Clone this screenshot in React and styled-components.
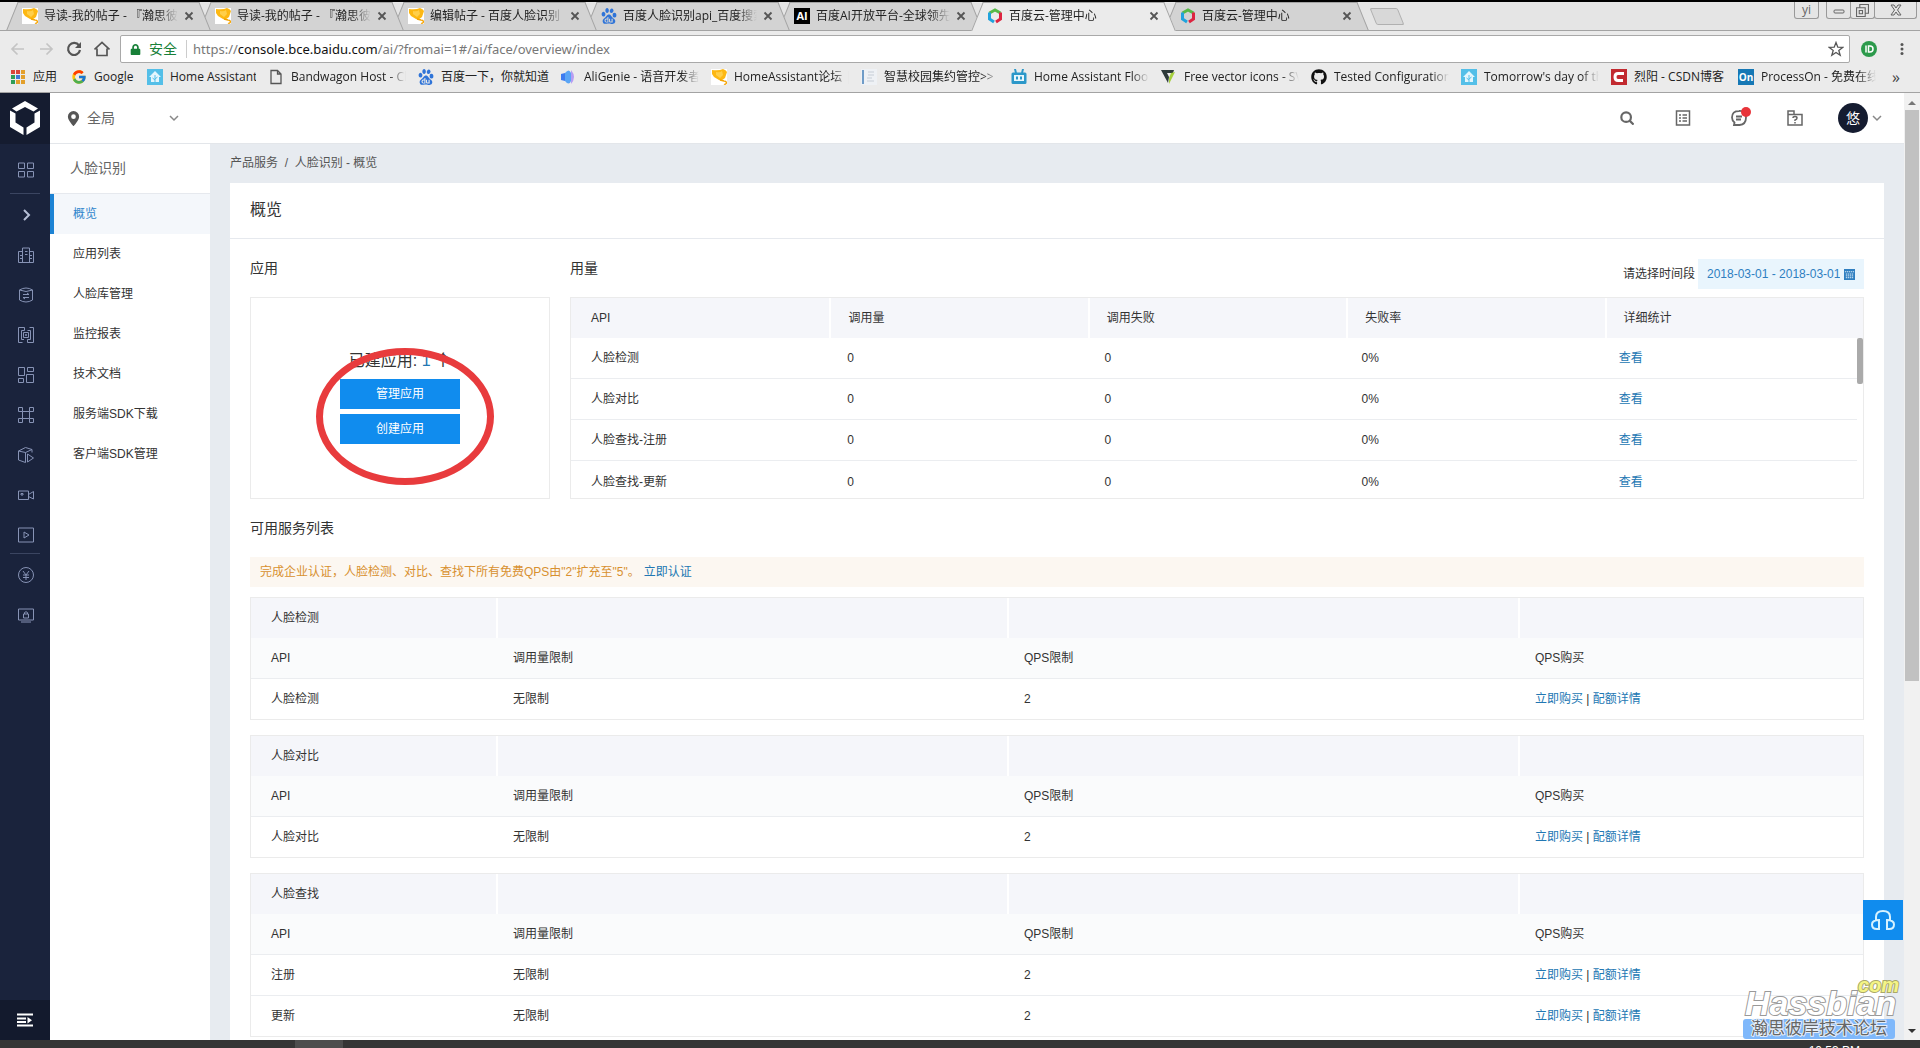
import React from "react";
import styled, { createGlobalStyle, css } from "styled-components";
import { FaGithub, FaLock } from "react-icons/fa";
import { FcGoogle } from "react-icons/fc";
import { SiBaidu } from "react-icons/si";

const GlobalStyle = createGlobalStyle`
  * {
    box-sizing: border-box;
  }
  body {
    margin: 0;
    overflow: hidden;
    background: #e7ebf0;
    color: #333;
    font-family: "Liberation Sans", "Noto Sans CJK SC", sans-serif;
    font-size: 12px;
    line-height: 18px;
  }
  button,
  input {
    font: inherit;
    color: inherit;
    border: none;
    background: none;
    padding: 0;
    margin: 0;
    outline: none;
  }
  a {
    color: #2277b3;
    text-decoration: none;
  }
  svg {
    display: block;
    flex: none;
  }
`;

const Screen = styled.div`
  display: flex;
  flex-direction: column;
  height: 100vh;
  border-top: 2px solid #000;
`;

/* ---------- browser ---------- */

const Browser = styled.header`
  flex: none;
  background: #ebebeb;
  border-bottom: 1px solid #a3a3a3;
  color: #222;
  font-family: "Open Sans", "Noto Sans CJK SC", sans-serif;
`;

const TabStrip = styled.div`
  display: flex;
  height: 29px;
  padding-left: 6px;
  background: #e5e5e5;
  border-bottom: 1px solid #a3a3a3;
`;

const tabSide = css`
  content: "";
  position: absolute;
  z-index: -1;
  top: 0;
  bottom: ${({ $active }) => ($active ? "-1px" : "0")};
  background: ${({ $active }) => ($active ? "#ebebeb" : "#d3d3d3")};
  border-top: 1px solid #a3a3a3;
`;

const Tab = styled.div`
  position: relative;
  z-index: ${({ $order }) => $order};
  isolation: isolate;
  display: flex;
  align-items: center;
  gap: 6px;
  width: 205px;
  margin-right: -12px;
  padding: 0 17px 0 16px;
  &::before {
    ${tabSide}
    left: 6px;
    right: 50%;
    border-left: 1px solid #a3a3a3;
    transform: skewX(-22deg);
    transform-origin: center;
  }
  &::after {
    ${tabSide}
    left: 42%;
    right: 6px;
    border-right: 1px solid #a3a3a3;
    transform: skewX(22deg);
  }
`;

const TabTitle = styled.button`
  flex: 1;
  min-width: 0;
  height: 20px;
  overflow: hidden;
  white-space: nowrap;
  text-align: left;
  mask-image: linear-gradient(to right, #000 85%, transparent);
`;

const NewTab = styled.button`
  align-self: center;
  width: 28px;
  height: 17px;
  margin-left: 16px;
  background: #d8d8d8;
  border: 1px solid #b0b0b0;
  border-radius: 2px;
  transform: skewX(22deg);
`;

const WindowButtons = styled.div`
  display: flex;
  height: 17px;
  margin-left: auto;
  margin-right: 4px;
  color: #666;
`;

const WindowButton = styled.button`
  display: flex;
  align-items: center;
  justify-content: center;
  width: ${({ $wide }) => ($wide ? "43px" : "25px")};
  margin-right: ${({ $apart }) => ($apart ? "7px" : "-1px")};
  border: 1px solid #999;
  border-top: none;
  border-radius: 0 0 3px 3px;
`;

const Toolbar = styled.div`
  display: flex;
  align-items: center;
  height: 32px;
  padding: 4px 12px 0 10px;
`;

const NavButton = styled.button`
  display: flex;
  align-items: center;
  width: 28px;
  color: ${({ disabled }) => (disabled ? "#c4c4c4" : "#555")};
`;

const AddressBar = styled.div`
  display: flex;
  align-items: center;
  flex: 1;
  height: 28px;
  margin: 0 11px 0 -2px;
  padding: 0 5px 0 9px;
  border: 1px solid #a9a9a9;
  border-radius: 2px;
  background: #fff;
  font-family: "Noto Sans", "Noto Sans CJK SC", sans-serif;
  font-size: 13px;
`;

const Secure = styled.span`
  padding: 0 9px 0 8px;
  margin-right: 6px;
  border-right: 1px solid #ccc;
  color: #188038;
  font-size: 14px;
`;

const Url = styled.span`
  flex: 1;
  color: #777;
  b {
    color: #111;
    font-weight: 400;
  }
`;

const ToolbarEnd = styled.div`
  display: flex;
  align-items: center;
  gap: 19px;
`;

const Bookmarks = styled.nav`
  display: flex;
  align-items: center;
  gap: 12px;
  height: 29px;
  padding: 0 20px 1px 10px;
`;

const Bookmark = styled.a`
  display: flex;
  flex: none;
  align-items: center;
  gap: 7px;
  color: #222;
`;

const BookmarkText = styled.span`
  width: ${({ $width }) => $width || 115}px;
  line-height: 20px;
  overflow: hidden;
  white-space: nowrap;
  mask-image: ${({ $width }) =>
    $width ? "none" : "linear-gradient(to right, #000 85%, transparent)"};
`;

const More = styled.button`
  margin-left: auto;
  color: #444;
  font-size: 16px;
`;

/* ---------- console shell ---------- */

const Console = styled.div`
  position: relative;
  display: flex;
  flex: 1;
  min-height: 0;
  overflow: hidden;
`;

const Rail = styled.nav`
  display: flex;
  flex: none;
  flex-direction: column;
  width: 50px;
  background: #1a233c;
  color: #8793b5;
`;

const RailLink = styled.a`
  display: flex;
  align-items: center;
  justify-content: center;
  height: ${({ $tall }) => ($tall ? "50px" : "40px")};
  padding: 2px 0 0 2px;
  color: inherit;
  position: relative;
  &::after {
    content: "";
    display: ${({ $divider }) => ($divider ? "block" : "none")};
    position: absolute;
    left: 10px;
    right: 10px;
    bottom: 0;
    border-bottom: 1px solid #3b4561;
  }
`;

const RailLogo = styled(RailLink)`
  height: 51px;
  padding: 0 0 1px;
  background: #151c30;
  color: #fff;
`;

const RailToggle = styled.button`
  display: flex;
  align-items: center;
  justify-content: center;
  height: 40px;
  margin-top: auto;
  background: #131a2d;
  color: #fff;
`;

const Page = styled.div`
  display: flex;
  flex: 1;
  flex-direction: column;
  min-width: 0;
`;

const TopBar = styled.div`
  display: flex;
  flex: none;
  align-items: center;
  height: 51px;
  padding: 0 22px 0 16px;
  background: #fff;
  border-bottom: 1px solid #e3e6ea;
  color: #666;
`;

const Region = styled.button`
  display: flex;
  align-items: center;
  gap: 6px;
  width: 113px;
  font-size: 14px;
  svg:last-child {
    margin-left: auto;
  }
`;

const TopActions = styled.div`
  display: flex;
  align-items: center;
  gap: 36px;
  margin-left: auto;
`;

const IconButton = styled.button`
  display: flex;
  align-items: center;
  justify-content: center;
  width: 20px;
`;

const Account = styled.button`
  display: flex;
  align-items: center;
  gap: 4px;
  margin-left: -3px;
`;

const Avatar = styled.span`
  display: flex;
  align-items: center;
  justify-content: center;
  width: 30px;
  height: 30px;
  border-radius: 50%;
  background: #151c30;
  color: #fff;
  font-size: 14px;
`;

const Columns = styled.div`
  display: flex;
  flex: 1;
  min-height: 0;
`;

const SideMenu = styled.aside`
  flex: none;
  width: 160px;
  background: #fff;
`;

const SideTitle = styled.div`
  height: 50px;
  padding-left: 20px;
  border-bottom: 1px solid #e6e9ee;
  color: #666;
  font-size: 14px;
  line-height: 48px;
`;

const SideLink = styled.a`
  display: block;
  height: 40px;
  padding-left: 19px;
  border-left: 4px solid ${({ $active }) => ($active ? "#1d83d4" : "transparent")};
  background: ${({ $active }) => ($active ? "#f4f7fb" : "transparent")};
  color: ${({ $active }) => ($active ? "#2f86cc" : "#333")};
  line-height: 40px;
`;

const Content = styled.main`
  flex: 1;
  min-width: 0;
  padding: 0 20px;
  background: #e7ebf0;
  overflow: hidden;
`;

const Breadcrumb = styled.div`
  height: 39px;
  color: #555;
  line-height: 38px;
  a {
    color: inherit;
  }
`;

const Card = styled.section`
  background: #fff;
`;

const CardTitle = styled.h1`
  height: 56px;
  margin: 0;
  padding-left: 20px;
  border-bottom: 1px solid #e6e9ee;
  font-size: 16px;
  font-weight: 400;
  line-height: 54px;
`;

const CardBody = styled.div`
  padding: 0 20px 20px;
`;

const Overview = styled.div`
  display: grid;
  grid-template-columns: 300px minmax(0, 1fr);
  column-gap: 20px;
`;

const SectionHead = styled.div`
  display: flex;
  align-items: center;
  justify-content: space-between;
  height: 58px;
  h2 {
    margin: 0;
    font-size: 14px;
    font-weight: 400;
  }
`;

const AppBox = styled.div`
  position: relative;
  display: flex;
  flex-direction: column;
  align-items: center;
  gap: 5px;
  height: 202px;
  padding-top: 50px;
  border: 1px solid #ebebeb;
`;

const AppCount = styled.div`
  font-size: 16px;
  line-height: 26px;
`;

const PrimaryButton = styled.button`
  width: 120px;
  height: 30px;
  background: #108cee;
  color: #fff;
`;

const Marker = styled.div`
  position: absolute;
  left: 65px;
  top: 50px;
  width: 178px;
  height: 137px;
  border: 7px solid #e83b3d;
  border-radius: 50%;
  pointer-events: none;
`;

const DatePicker = styled.label`
  display: flex;
  align-items: center;
  align-self: flex-end;
  gap: 3px;
  margin-bottom: 8px;
`;

const DateField = styled.span`
  display: flex;
  align-items: center;
  gap: 4px;
  width: 166px;
  height: 30px;
  padding: 0 9px;
  background: #e9f5fd;
  color: #2f7fc1;
  input {
    flex: 1;
    min-width: 0;
  }
`;

const Usage = styled.div`
  height: 202px;
  border: 1px solid #ebebeb;
`;

const UsageBody = styled.div`
  display: flex;
  align-items: flex-start;
  height: 160px;
  overflow: hidden;
`;

const ScrollThumb = styled.div`
  flex: none;
  width: 6px;
  height: 46px;
  border-radius: 2px;
  background: #aaa;
`;

const Table = styled.table`
  width: 100%;
  table-layout: fixed;
  border-spacing: 0;
  border: ${({ $framed }) => ($framed ? "1px solid #ebebeb" : "none")};
  margin-bottom: ${({ $framed }) => ($framed ? "15px" : "0")};
  th,
  td {
    height: 41px;
    padding: 0 0 0 20px;
    border-bottom: 1px solid #ebedf0;
    font-weight: 400;
    text-align: left;
  }
  td:not(:first-child),
  th:not(:first-child) {
    padding-left: ${({ $framed }) => ($framed ? "17px" : "19px")};
  }
  thead th {
    height: 40px;
    background: #f5f6fa;
    border-bottom: none;
  }
  thead th:not(:first-child) {
    padding-left: 17px;
    border-left: 2px solid #fff;
  }
  tbody tr:last-child td {
    height: ${({ $framed }) => ($framed ? "40px" : "41px")};
    border-bottom: none;
  }
`;

const SubHead = styled.tr`
  background: #fafbfc;
`;

const Notice = styled.div`
  height: 30px;
  margin-bottom: 10px;
  padding-left: 10px;
  background: #fcf7f1;
  color: #d8902f;
  line-height: 30px;
  a {
    margin-left: 4px;
  }
`;

const Scrollbar = styled.div`
  display: flex;
  flex: none;
  flex-direction: column;
  align-items: center;
  width: 16px;
  padding: 6px 0 5px;
  background: #f1f1f1;
  color: #777;
`;

const ScrollbarThumb = styled.div`
  width: 14px;
  height: 61%;
  margin: 3px 0 auto;
  background: #c1c1c1;
`;

const Support = styled.button`
  position: absolute;
  right: 17px;
  bottom: 100px;
  display: flex;
  align-items: center;
  justify-content: center;
  width: 40px;
  height: 40px;
  background: #108cee;
  color: #d6f2ff;
`;

const Watermark = styled.div`
  position: absolute;
  right: 25px;
  bottom: 1px;
  width: 152px;
  font-style: italic;
`;

const WatermarkCom = styled.div`
  margin-right: -4px;
  color: #f4f486;
  font-size: 20px;
  font-weight: 700;
  line-height: 12px;
  text-align: right;
  -webkit-text-stroke: 2px #aaa86a;
  paint-order: stroke fill;
`;

const WatermarkName = styled.div`
  padding: 0 0 4px 2px;
  color: #fff;
  font-size: 34px;
  font-weight: 700;
  line-height: 24px;
  -webkit-text-stroke: 2px #999;
  paint-order: stroke fill;
`;

const WatermarkForum = styled.div`
  height: 20px;
  border-radius: 3px;
  background: #7fb8fb;
  color: #666;
  font-size: 17px;
  font-style: normal;
  line-height: 20px;
  text-align: center;
  -webkit-text-stroke: 2px #e4eefa;
  paint-order: stroke fill;
`;

const Taskbar = styled.footer`
  display: flex;
  flex: none;
  height: 8px;
  padding: 0 60px 0 295px;
  overflow: hidden;
  background: #353535;
  color: #fff;
`;

const TaskItem = styled.div`
  width: 48px;
  background: #4d4d4d;
`;

const Clock = styled.time`
  margin-left: auto;
  padding-top: 4px;
  line-height: 14px;
`;

/* ---------- icons ---------- */

const Icon = ({ size = 16, box = 16, width = 1, children, ...rest }) => (
  <svg
    width={size}
    height={size}
    viewBox={`0 0 ${box} ${box}`}
    fill="none"
    stroke="currentColor"
    strokeWidth={width}
    aria-hidden="true"
    {...rest}
  >
    {children}
  </svg>
);

const Trophy = () => (
  <Icon stroke="none">
    <rect width="16" height="16" fill="#fff" />
    <path d="M1 1q7 1 11-1 3 1 4 3l-2 6q-3 3-6 2L3 8 1 5z" fill="#fdb813" />
    <path d="M5 3q4 1 6-1l1 4-3 3-4-3z" fill="#ffcf4a" />
    <path d="M9 11l4 1M13 12.500a1.500 1.500 0 110 2.500" stroke="#f5a300" strokeWidth="1.300" />
  </Icon>
);

const BceIcon = () => (
  <Icon width="3">
    <path d="M2.500 5L8 2l5.500 3" stroke="#56b947" />
    <path d="M2.500 4.500v6.500L7 14" stroke="#20a3dd" />
    <path d="M13.500 4.500v6.500L9 14" stroke="#dd2440" />
  </Icon>
);

const AiIcon = () => (
  <svg width="16" height="16" viewBox="0 0 16 16" aria-hidden="true">
    <rect width="16" height="16" fill="#000" />
    <text x="8" y="12" fill="#fff" fontSize="11" fontWeight="700" textAnchor="middle">
      AI
    </text>
  </svg>
);

const BaiduIcon = () => <SiBaidu size={16} color="#2f74d8" />;

const HomeIcon = () => (
  <Icon stroke="none">
    <rect width="16" height="16" fill="#54bfe8" />
    <path d="M8 2l6 6h-2v5H4V8H2z" fill="#e4f6fd" />
    <path d="M8 6v7M8 11L5.500 9M8 10l2.500-2" stroke="#54bfe8" />
  </Icon>
);

const appColors = ["#d9453a", "#d9453a", "#e3a02c", "#2f9e58", "#3f78d8", "#e3a02c", "#2f9e58", "#e3a02c", "#e3a02c"];

const AppsIcon = () => (
  <Icon stroke="none">
    {appColors.map((fill, i) => (
      <rect key={i} x={1 + (i % 3) * 5} y={1 + Math.floor(i / 3) * 5} width="4" height="4" fill={fill} />
    ))}
  </Icon>
);

const FileIcon = () => (
  <Icon color="#555" width="1.3">
    <path d="M3 1.500h6.500L13 5v9.500H3zM9.500 1.500V5H13" />
  </Icon>
);

const GenieIcon = () => (
  <Icon stroke="none">
    <path d="M0 5l4-1v8l-4-1z" fill="#3d7bf0" />
    <path d="M4 4q4-5 6 0v8q-2 5-6 0z" fill="#5aa5f5" />
    <path d="M10 1q6 7 0 14z" fill="#b79df3" />
  </Icon>
);

const BookIcon = () => (
  <Icon stroke="none">
    <rect width="16" height="16" fill="#eef1f5" />
    <path d="M1 1h2v14H1z" fill="#6f9cc8" />
    <path d="M7 3h6M7 6h6M6 9h5M6 12h7" stroke="#c6cdd6" />
  </Icon>
);

const BotIcon = () => (
  <Icon stroke="none">
    <path d="M2 3.500h12q1.500 0 1.500 1.500v8.500q0 1.500-1.500 1.500H2Q.500 15 .500 13.500V5Q.500 3.500 2 3.500zM3 0h2l1 4H4zM11 0h2l-1 4h-2z" fill="#2c98c9" />
    <path d="M3 6h10v6H3z" fill="#e9f7fc" />
    <path d="M5 7.500h2v3H5zM9 7.500h2v3H9z" fill="#2c98c9" />
  </Icon>
);

const VectorIcon = () => (
  <Icon stroke="none">
    <path d="M0 1h13l-1 3H6l2 4-1 6z" fill="#2d3a3a" />
    <path d="M14 3L8 15V9l2-5z" fill="#a5cf3d" />
  </Icon>
);

const CsdnIcon = () => (
  <Icon width="3">
    <rect width="16" height="16" fill="#c22a30" stroke="none" />
    <path d="M13 4.500H7q-3 0-3 3.500t3 3.500h5" stroke="#fff" />
  </Icon>
);

const ProcessIcon = () => (
  <svg width="16" height="16" viewBox="0 0 16 16" aria-hidden="true">
    <rect width="16" height="16" fill="#1678b5" />
    <text x="8" y="12" fill="#fff" fontSize="10" fontWeight="700" textAnchor="middle">
      On
    </text>
  </svg>
);

const CloseIcon = () => (
  <Icon size={10} box={10} width="1.800" color="#555">
    <path d="M1.500 1.500l7 7M8.500 1.500l-7 7" />
  </Icon>
);

const ChevronDown = () => (
  <Icon size={10} box={10} width="1.500" color="#888">
    <path d="M1 3l4 4 4-4" />
  </Icon>
);

/* ---------- data ---------- */

const tabs = [
  { title: "导读-我的帖子 - 『瀚思彼岸", icon: Trophy },
  { title: "导读-我的帖子 - 『瀚思彼岸", icon: Trophy },
  { title: "编辑帖子 - 百度人脸识别", icon: Trophy },
  { title: "百度人脸识别api_百度搜索", icon: BaiduIcon },
  { title: "百度AI开放平台-全球领先", icon: AiIcon },
  { title: "百度云-管理中心", icon: BceIcon, active: true },
  { title: "百度云-管理中心", icon: BceIcon },
];

const bookmarks = [
  { title: "应用", icon: AppsIcon, width: 26 },
  { title: "Google", icon: () => <FcGoogle size={16} />, width: 41 },
  { title: "Home Assistant", icon: HomeIcon, width: 86 },
  { title: "Bandwagon Host - Client", icon: FileIcon },
  { title: "百度一下，你就知道", icon: BaiduIcon, width: 108 },
  { title: "AliGenie - 语音开发者", icon: GenieIcon },
  { title: "HomeAssistant论坛 |", icon: Trophy },
  { title: "智慧校园集约管控>>", icon: BookIcon },
  { title: "Home Assistant Floor", icon: BotIcon },
  { title: "Free vector icons - SVG", icon: VectorIcon },
  { title: "Tested Configuration", icon: () => <FaGithub size={16} color="#111" /> },
  { title: "Tomorrow's day of the", icon: HomeIcon },
  { title: "烈阳 - CSDN博客", icon: CsdnIcon, width: 92 },
  { title: "ProcessOn - 免费在线", icon: ProcessIcon },
];

const railIcons = [
  { name: "全部产品", tall: true, divider: true, path: "M.500 1h6v5.500h-6zM9.500 1h6v5.500h-6zM.500 9.500h6V15h-6zM9.500 9.500h6V15h-6z" },
  { name: "展开", bold: true, path: "M6 3l5 5-5 5" },
  { name: "计算", path: "M4.500 15.500V1h7v14.500M.500 4.500h4v11h-4zM11.500 4.500h4v11h-4zM7 4.500h2.500M7 7.500h2.500M4 15.500h8M2 8.500h2.500M2 11.500h2.500M11.500 8.500H14M11.500 11.500H14" },
  { name: "数据库", path: "M1.500 3q6.500-4 13 0v10q-6.500 4-13 0zM1.500 3q6.500 3 13 0M5 7.500h6L9 6M11 10.500H5L7 12" },
  { name: "网络", path: "M6.500 .500h-6v15h4M9.500 15.500h6V.500h-4M6.500 .500v3h-3v9H6M9.500 15.500v-3h3v-9H9.500M5.500 5.500h5v5h-5zM7.500 7.500h1v1h-1z" },
  { name: "应用", path: "M.500 .500h6v8h-6zM9.500 .500h6v4h-6zM8.500 7.500h7v8h-7zM.500 11.500h5v4h-5z" },
  { name: "物联网", path: "M.500 .500h4v4h-4zM11.500 .500h4v4h-4zM.500 11.500h4v4h-4zM11.500 11.500h4v4h-4zM4.500 4.500h7v7h-7z" },
  { name: "大数据", path: "M.500 4l7-3.500 6.500 2-6.500 3zM.500 4v9l7 2.500V5.500M14 2.500v3M9.500 7v8l6-4z" },
  { name: "视频", path: "M.500 4h10v8.500H.500zM10.500 7.500l5-3v7.500l-5-2.500M3 6.500h2v1.500H3z" },
  { name: "多媒体", divider: true, path: "M.500 1h15v14H.500zM6 5l5 3-5 3z" },
  { name: "财务", path: "M8 .500a7.500 7.500 0 100 15A7.500 7.500 0 108 .500M5 4l3 4 3-4M8 8v5M5 8h6M5 10.500h6" },
  { name: "安全", path: "M.500 2h15v11H.500zM3 15h10M5.500 7h5v4h-5zM6.500 7V5.500q1.500-1.500 3 0V7" },
];

const menu = ["概览", "应用列表", "人脸库管理", "监控报表", "技术文档", "服务端SDK下载", "客户端SDK管理"];

const usageHeads = ["API", "调用量", "调用失败", "失败率", "详细统计"];
const usageRows = ["人脸检测", "人脸对比", "人脸查找-注册", "人脸查找-更新"];

const services = [
  { name: "人脸检测", apis: ["人脸检测"] },
  { name: "人脸对比", apis: ["人脸对比"] },
  { name: "人脸查找", apis: ["注册", "更新"] },
];

/* ---------- parts ---------- */

const BrowserBar = () => (
  <Browser>
    <TabStrip>
      {tabs.map(({ title, icon: TabIcon, active }, i) => (
        <Tab key={i} $active={active} $order={active ? 20 : 10 - i}>
          <TabIcon />
          <TabTitle>{title}</TabTitle>
          <button aria-label="关闭标签页">
            <CloseIcon />
          </button>
        </Tab>
      ))}
      <NewTab aria-label="新标签页" />
      <WindowButtons>
        <WindowButton $apart>yi</WindowButton>
        <WindowButton aria-label="最小化">
          <Icon size={12} box={12}>
            <rect x="1" y="6" width="10" height="3" rx="1" />
          </Icon>
        </WindowButton>
        <WindowButton aria-label="还原">
          <Icon size={13} box={12}>
            <path d="M3.500 3V.500h8v8H9M.500 3.500H8.500v8h-8zM3 6h3v3H3z" />
          </Icon>
        </WindowButton>
        <WindowButton $wide aria-label="关闭">
          <Icon size={12} box={12}>
            <path d="M1 1h3l2 3 2-3h3L7.500 6l3.500 5H8L6 8l-2 3H1l3.500-5z" />
          </Icon>
        </WindowButton>
      </WindowButtons>
    </TabStrip>
    <Toolbar>
      <NavButton disabled aria-label="后退">
        <Icon width="1.700">
          <path d="M14 8H2M7.500 2.500L2 8l5.500 5.500" />
        </Icon>
      </NavButton>
      <NavButton disabled aria-label="前进">
        <Icon width="1.700">
          <path d="M2 8h12M8.500 2.500L14 8l-5.500 5.500" />
        </Icon>
      </NavButton>
      <NavButton aria-label="刷新">
        <Icon width="2.200">
          <path d="M13 4.500A6 6 0 1014 9" />
          <path d="M15 1v6H9z" fill="currentColor" stroke="none" />
        </Icon>
      </NavButton>
      <NavButton aria-label="主页">
        <Icon width="1.700">
          <path d="M.500 8.500L8 1.500l7.500 7M3 7.500v7h10v-7" />
        </Icon>
      </NavButton>
      <AddressBar>
        <FaLock size={11} color="#188038" />
        <Secure>安全</Secure>
        <Url>
          https://<b>console.bce.baidu.com</b>/ai/?fromai=1#/ai/face/overview/index
        </Url>
        <Icon color="#555" width="1.300">
          <path d="M8 1.500l1.800 4.700 4.900.200-3.900 3 1.400 4.900L8 11.500l-4.200 2.800 1.400-4.900-3.900-3 4.900-.200z" />
        </Icon>
      </AddressBar>
      <ToolbarEnd>
        <Icon width="1.500">
          <circle cx="8" cy="8" r="8" fill="#2c9a4b" stroke="none" />
          <path d="M5 4.500v7M7.500 5h1.500q3 0 3 3t-3 3H7.500z" stroke="#fff" />
        </Icon>
        <Icon size={12} stroke="none" fill="#555">
          <circle cx="8" cy="2" r="2" />
          <circle cx="8" cy="8" r="2" />
          <circle cx="8" cy="14" r="2" />
        </Icon>
      </ToolbarEnd>
    </Toolbar>
    <Bookmarks>
      {bookmarks.map(({ title, icon: MarkIcon, width }) => (
        <Bookmark key={title} href="#">
          <MarkIcon />
          <BookmarkText $width={width}>{title}</BookmarkText>
        </Bookmark>
      ))}
      <More aria-label="更多书签">»</More>
    </Bookmarks>
  </Browser>
);

const IconRail = () => (
  <Rail>
    <RailLogo href="#" aria-label="百度云">
      <Icon size={34} box={34} fill="currentColor" stroke="none">
        <path d="M17 0l13 7.500-4.500 3L17 6l-8.500 4.500-4.500-3z" />
        <path d="M2 9.500l5.500 3v9l8 5V34L2 26z" />
        <path d="M32 9.500l-5.500 3v9l-8 5V34L32 26z" />
      </Icon>
    </RailLogo>
    {railIcons.map(({ name, path, tall, divider, bold }) => (
      <RailLink key={name} href="#" aria-label={name} $tall={tall} $divider={divider}>
        <Icon width={bold ? 2 : 1} color={bold ? "#b6bfd6" : undefined}>
          <path d={path} />
        </Icon>
      </RailLink>
    ))}
    <RailToggle aria-label="收起导航">
      <Icon width="2">
        <path d="M0 2.500h16M0 6.500h9M0 10h9M0 13.500h16" />
        <path d="M10.500 5l4.500 3.200-4.500 3.200z" fill="currentColor" stroke="none" />
      </Icon>
    </RailToggle>
  </Rail>
);

const ConsoleTop = () => (
  <TopBar>
    <Region>
      <Icon size={15} stroke="none" fill="#555">
        <path
          fillRule="evenodd"
          d="M8 0a6 6 0 00-6 6c0 4 6 10 6 10s6-6 6-10a6 6 0 00-6-6zm0 3.500a2.500 2.500 0 110 5 2.500 2.500 0 010-5z"
        />
      </Icon>
      全局
      <ChevronDown />
    </Region>
    <TopActions>
      <IconButton aria-label="搜索">
        <Icon width="2.500" size={14}>
          <circle cx="7" cy="7" r="5.500" />
          <path d="M11 11l4.500 4.500" />
        </Icon>
      </IconButton>
      <IconButton aria-label="工单">
        <Icon width="1.500">
          <path d="M1.500 1h13v14h-13zM4 5h2M4 8h2M4 11h2M7.500 5h4.500M7.500 8h4.500M7.500 11h4.500" />
        </Icon>
      </IconButton>
      <IconButton aria-label="消息">
        <Icon size={24} box={24} width="1.800">
          <path d="M12 5q-7 0-7 6.500 0 3 2.500 5L7 19h5.500q6.500-.500 6.500-7.500T12 5zM9 10.500h6M9 13.500h5" />
          <circle cx="19" cy="6" r="5" fill="#e8343a" stroke="none" />
        </Icon>
      </IconButton>
      <IconButton aria-label="帮助">
        <Icon width="1.500">
          <path d="M1 15V1h6v3.500h8V15zM1 4.500h6M6 8q0-1.500 2-1.500t2 1.500-2 2v1M8 12v1.500" />
        </Icon>
      </IconButton>
      <Account aria-label="账户">
        <Avatar>悠</Avatar>
        <ChevronDown />
      </Account>
    </TopActions>
  </TopBar>
);

const UsagePanel = () => (
  <Usage>
    <Table>
      <thead>
        <tr>
          {usageHeads.map((head) => (
            <th key={head}>{head}</th>
          ))}
        </tr>
      </thead>
    </Table>
    <UsageBody>
      <Table>
        <tbody>
          {usageRows.map((name) => (
            <tr key={name}>
              <td>{name}</td>
              <td>0</td>
              <td>0</td>
              <td>0%</td>
              <td>
                <a href="#">查看</a>
              </td>
            </tr>
          ))}
        </tbody>
      </Table>
      <ScrollThumb />
    </UsageBody>
  </Usage>
);

const ServiceTable = ({ name, apis }) => (
  <Table $framed>
    <colgroup>
      <col width="15.2%" />
      <col width="31.7%" />
      <col width="31.7%" />
      <col />
    </colgroup>
    <thead>
      <tr>
        <th>{name}</th>
        <th />
        <th />
        <th />
      </tr>
    </thead>
    <tbody>
      <SubHead>
        <th>API</th>
        <th>调用量限制</th>
        <th>QPS限制</th>
        <th>QPS购买</th>
      </SubHead>
      {apis.map((api) => (
        <tr key={api}>
          <td>{api}</td>
          <td>无限制</td>
          <td>2</td>
          <td>
            <a href="#">立即购买</a> | <a href="#">配额详情</a>
          </td>
        </tr>
      ))}
    </tbody>
  </Table>
);

const App = () => {
  return (
    <Screen>
      <GlobalStyle />
      <BrowserBar />
      <Console>
        <IconRail />
        <Page>
          <ConsoleTop />
          <Columns>
            <SideMenu>
              <SideTitle>人脸识别</SideTitle>
              {menu.map((item, i) => (
                <SideLink key={item} href="#" $active={i === 0}>
                  {item}
                </SideLink>
              ))}
            </SideMenu>
            <Content>
              <Breadcrumb>
                <a href="#">产品服务</a>&nbsp; / &nbsp;人脸识别 - 概览
              </Breadcrumb>
              <Card>
                <CardTitle>概览</CardTitle>
                <CardBody>
                  <Overview>
                    <div>
                      <SectionHead>
                        <h2>应用</h2>
                      </SectionHead>
                      <AppBox>
                        <AppCount>
                          已建应用: <a href="#">1</a> 个
                        </AppCount>
                        <PrimaryButton>管理应用</PrimaryButton>
                        <PrimaryButton>创建应用</PrimaryButton>
                        <Marker />
                      </AppBox>
                    </div>
                    <div>
                      <SectionHead>
                        <h2>用量</h2>
                        <DatePicker>
                          请选择时间段
                          <DateField>
                            <input defaultValue="2018-03-01 - 2018-03-01" />
                            <Icon size={11} box={12}>
                              <rect width="12" height="12" fill="currentColor" stroke="none" />
                              <path d="M1 3h10M2 5.500h8M2 7.500h8M2 9.500h8" stroke="#e9f5fd" strokeDasharray="1.500 .700" />
                            </Icon>
                          </DateField>
                        </DatePicker>
                      </SectionHead>
                      <UsagePanel />
                    </div>
                  </Overview>
                  <SectionHead>
                    <h2>可用服务列表</h2>
                  </SectionHead>
                  <Notice>
                    完成企业认证，人脸检测、对比、查找下所有免费QPS由"2"扩充至"5"。
                    <a href="#">立即认证</a>
                  </Notice>
                  {services.map((service) => (
                    <ServiceTable key={service.name} {...service} />
                  ))}
                </CardBody>
              </Card>
            </Content>
          </Columns>
        </Page>
        <Scrollbar>
          <Icon size={8} box={8} stroke="none" fill="currentColor">
            <path d="M0 6l4-4 4 4z" />
          </Icon>
          <ScrollbarThumb />
          <Icon size={8} box={8} stroke="none" fill="#333">
            <path d="M0 2l4 4 4-4z" />
          </Icon>
        </Scrollbar>
        <Support aria-label="在线咨询">
          <Icon size={26} box={26} width="2">
            <path d="M6 13V10q0-6 7-6t7 6v3M9 13v9H7q-5 0-5-4.500T9 13zM17 13v9h2q5 0 5-4.500T17 13z" />
          </Icon>
        </Support>
        <Watermark>
          <WatermarkCom>com</WatermarkCom>
          <WatermarkName>Hassbian</WatermarkName>
          <WatermarkForum>瀚思彼岸技术论坛</WatermarkForum>
        </Watermark>
      </Console>
      <Taskbar>
        <TaskItem />
        <Clock>10:53 PM</Clock>
      </Taskbar>
    </Screen>
  );
};

export default App;
